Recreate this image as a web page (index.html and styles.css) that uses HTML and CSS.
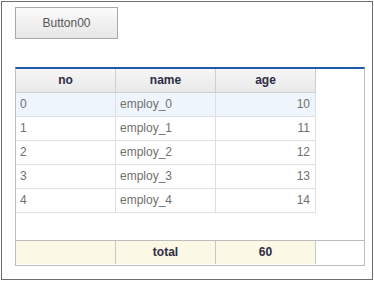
FILE: index.html
```html
<!DOCTYPE html>
<html>

<head>
  <meta charset="UTF-8" />
  <title>Grid Sample</title>
  <link rel="stylesheet" href="styles.css">
</head>

<body>
  <div class="frame">
    <button type="button" class="btn">Button00</button>

    <div class="grid">
      <div class="row head">
        <div class="cell">no</div>
        <div class="cell">name</div>
        <div class="cell">age</div>
      </div>
      <div class="body">
        <div class="row selected">
          <div class="cell left">0</div>
          <div class="cell left">employ_0</div>
          <div class="cell right">10</div>
        </div>
        <div class="row">
          <div class="cell left">1</div>
          <div class="cell left">employ_1</div>
          <div class="cell right">11</div>
        </div>
        <div class="row">
          <div class="cell left">2</div>
          <div class="cell left">employ_2</div>
          <div class="cell right">12</div>
        </div>
        <div class="row">
          <div class="cell left">3</div>
          <div class="cell left">employ_3</div>
          <div class="cell right">13</div>
        </div>
        <div class="row">
          <div class="cell left">4</div>
          <div class="cell left">employ_4</div>
          <div class="cell right">14</div>
        </div>
      </div>
      <div class="row summary">
        <div class="cell"></div>
        <div class="cell">total</div>
        <div class="cell">60</div>
      </div>
    </div>
  </div>
</body>

</html>
```

FILE: styles.css
```css
body {
  margin: 0;
  font-family: "Liberation Sans", "DejaVu Sans", sans-serif;
  font-size: 12px;
}

/* outer form frame */
.frame {
  margin: 1px 0 0 1px;
  width: 372px;
  height: 279px;
  border: 1px solid #6e6e6e;
  padding: 5px 13px 0;
  box-sizing: border-box;
  background: #fff;
}

.btn {
  display: block;
  width: 103px;
  height: 32px;
  border: 1px solid #a8a8a8;
  background: linear-gradient(#fbfbfb, #e6e6e6);
  color: #555;
  font-family: inherit;
  font-size: 12px;
  padding: 0;
}

/* grid */
.grid {
  margin-top: 28px;
  width: 350px;
  height: 199px;
  border: 1px solid #bdbdbd;
  border-top: 2px solid #1e5aa8;
  box-sizing: border-box;
  display: flex;
  flex-direction: column;
}

.body {
  flex: 1;
}

.row {
  display: flex;
  height: 24px;
}

.cell {
  width: 99px;
  height: 23px;
  line-height: 23px;
  border-right: 1px solid #dcdfe3;
  border-bottom: 1px solid #dcdfe3;
  color: #707070;
  text-align: center;
  white-space: nowrap;
  overflow: hidden;
}

.cell.left {
  text-align: left;
  padding-left: 4px;
  width: 95px;
}

.cell.right {
  text-align: right;
  padding-right: 5px;
  width: 94px;
}

.head .cell {
  background: linear-gradient(#f6f6f6, #e9e9e9);
  border-color: #cfcfcf;
  color: #2f2b45;
  font-weight: bold;
}

.selected .cell {
  background: #eef5fc;
}

.summary {
  border-top: 1px solid #bdbdbd;
}

.summary .cell {
  background: #fbf8e6;
  border-right-color: #c8c8c8;
  border-bottom: none;
  color: #2f2b45;
  font-weight: bold;
}
```
